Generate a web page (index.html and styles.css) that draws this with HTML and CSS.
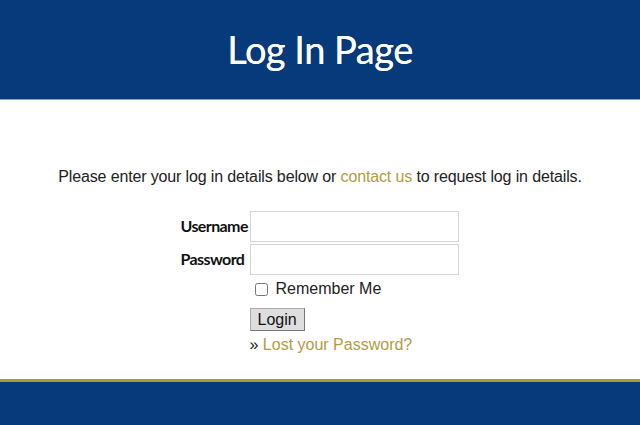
FILE: index.html
```html
<!DOCTYPE html>
<html lang="en">
<head>
<meta charset="utf-8">
<title>Log In Page</title>
<link rel="stylesheet" href="styles.css">
</head>
<body>
<div class="page">
  <header class="header">
    <h1 class="title">Log In Page</h1>
  </header>
  <main class="main">
    <p class="intro">Please enter your log in details below or <a class="link" href="#">contact us</a> to request log in details.</p>
    <form class="form">
      <label class="label" for="user">Username</label>
      <input class="field" id="user" type="text">
      <label class="label" for="pass">Password</label>
      <input class="field" id="pass" type="password">
      <div class="spacer"></div>
      <label class="remember"><input class="check" type="checkbox"> Remember Me</label>
      <div class="spacer"></div>
      <div class="btn-row"><button class="btn" type="button">Login</button></div>
      <div class="spacer"></div>
      <p class="lost">&raquo; <a class="link" href="#">Lost your Password?</a></p>
    </form>
  </main>
  <footer class="footer"></footer>
</div>
</body>
</html>
```
FILE: styles.css
```css
html, body {
  margin: 0;
  padding: 0;
  background: #fff;
}
.page {
  display: flex;
  flex-direction: column;
  height: 100vh;
  font-family: "Liberation Sans", Arial, sans-serif;
}
.header {
  height: 99px;
  background: #063a7a;
  border-bottom: 1px solid #8aa2c6;
  display: flex;
  align-items: center;
  justify-content: center;
}
.title {
  margin: 0;
  color: #fff;
  font-family: Lato, "Open Sans", sans-serif;
  font-weight: 400;
  font-size: 38px;
  letter-spacing: -0.5px;
  line-height: 1;
  padding-bottom: 2px;
  text-shadow: 0 0 0.6px #fff;
}
.main {
  flex: 1;
  display: flex;
  flex-direction: column;
  align-items: center;
  padding-top: 68px;
}
.intro {
  margin: 0;
  font-size: 16px;
  line-height: 18px;
  letter-spacing: -0.14px;
  color: #222;
}
.link {
  color: #b39b45;
  text-decoration: none;
}
.form {
  margin-top: 25px;
  display: grid;
  grid-template-columns: 69px 210px;
  row-gap: 2px;
  align-items: center;
}
.label {
  font-family: Lato, "Open Sans", sans-serif;
  font-weight: 700;
  font-size: 16px;
  letter-spacing: -0.6px;
  color: #111;
  margin-top: -2px;
}
.field {
  box-sizing: border-box;
  width: 209px;
  height: 31px;
  margin: 0;
  border: 1px solid #d6d6d6;
  background: #fff;
}
.remember {
  display: flex;
  align-items: center;
  gap: 8px;
  font-size: 16px;
  color: #222;
  height: 28px;
  margin-top: -2px;
}
.check {
  margin: 0 0 0 5px;
  width: 13px;
  height: 13px;
}
.btn-row {
  margin-top: 3px;
}
.btn {
  font-family: "Liberation Sans", Arial, sans-serif;
  font-size: 16px;
  color: #111;
  background: #dedede;
  border: 1px solid #aaa;
  border-right-color: #777;
  border-bottom-color: #777;
  padding: 1px 7px;
  height: 23px;
  line-height: 18px;
}
.lost {
  margin: 3px 0 0;
  font-size: 16px;
  color: #222;
}
.footer {
  height: 43px;
  background: #063a7a;
  border-top: 3px solid #b09a2e;
}
```
